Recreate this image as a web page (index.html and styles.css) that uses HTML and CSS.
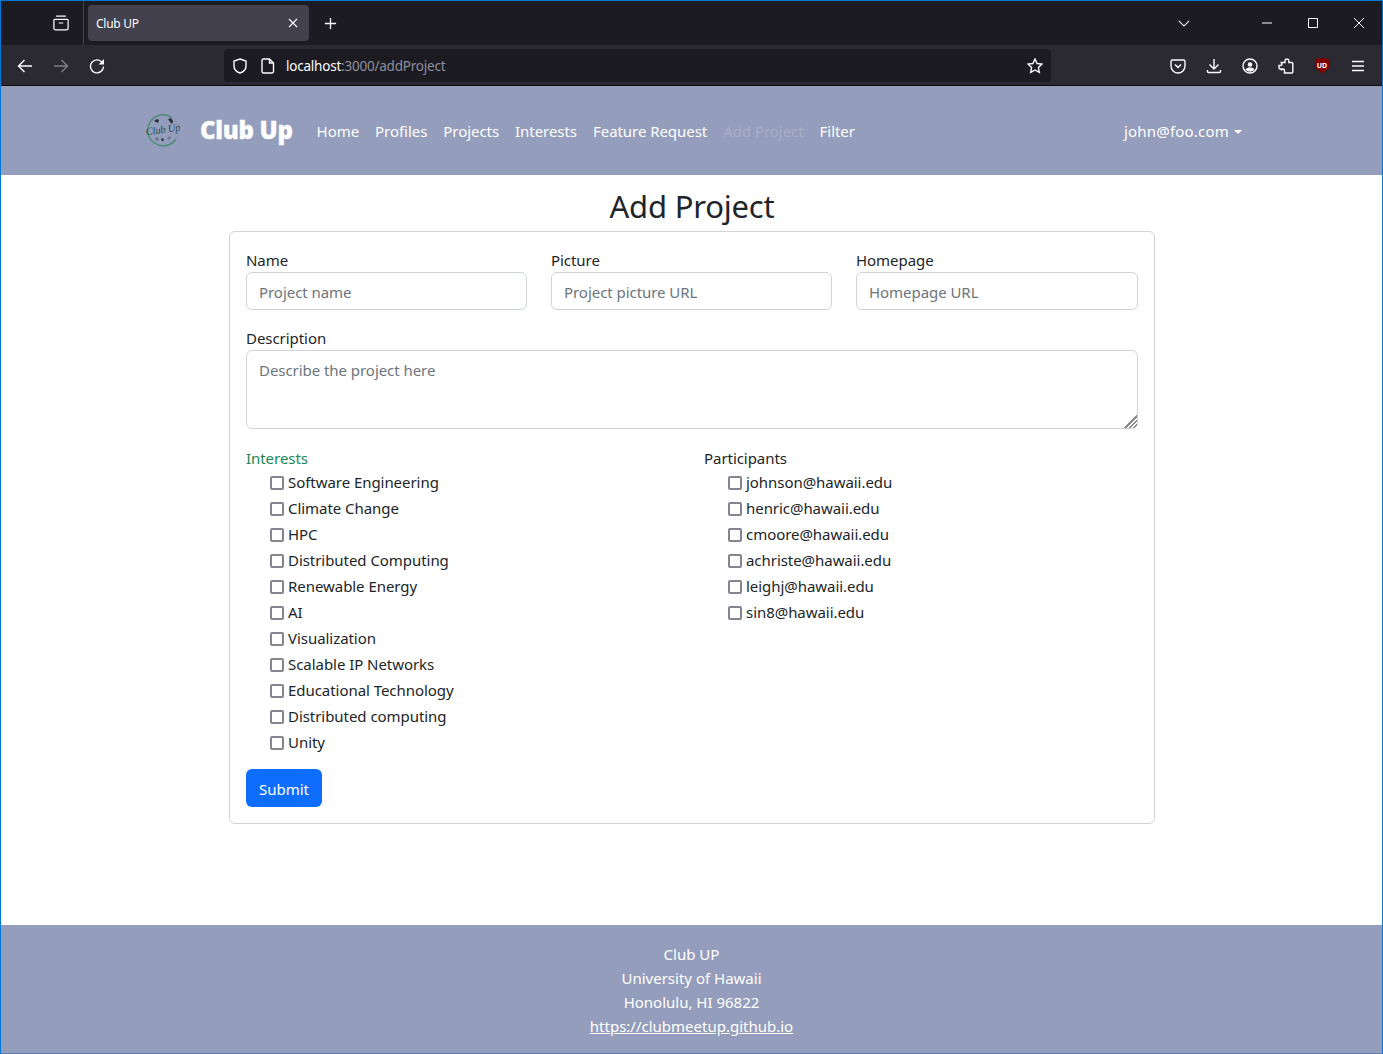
FILE: index.html
```html
<!DOCTYPE html>
<html lang="en">
<head>
    <meta charset="UTF-8">
    <title>Club UP</title>
    <link rel="stylesheet" href="styles.css">
</head>
<body>
<div class="window">
    <div class="tabstrip">
        <div class="strip-left">
            <svg class="icon" viewBox="0 0 18 18"><path d="M3.500 1.200h11M1.800 4.800h14.400a1 1 0 0 1 .8 1v9a2 2 0 0 1-2 2H3a2 2 0 0 1-2-2v-9a1 1 0 0 1 .8-1z M6.500 9h5"/></svg>
        </div>
        <div class="tab">
            <span class="tab-title">Club UP</span>
            <svg class="tab-close" viewBox="0 0 10 10"><path d="M1 1l8 8M9 1l-8 8"/></svg>
        </div>
        <svg class="new-tab" viewBox="0 0 14 14"><path d="M7 1v12M1 7h12"/></svg>
        <svg class="tabs-menu" viewBox="0 0 14 8"><path d="M1 1l6 6 6-6"/></svg>
        <svg class="win-btn win-min" viewBox="0 0 10 10"><path d="M0 5h10"/></svg>
        <svg class="win-btn win-max" viewBox="0 0 10 10"><path d="M.5.5h9v9h-9z"/></svg>
        <svg class="win-btn win-close" viewBox="0 0 10 10"><path d="M0 0l10 10M10 0L0 10"/></svg>
    </div>
    <div class="toolbar">
        <span class="tool"><svg class="icon" viewBox="0 0 16 16"><path d="M15 8H1.500M7.500 2l-6 6 6 6"/></svg></span>
        <span class="tool tool-off"><svg class="icon" viewBox="0 0 16 16"><path d="M1 8h13.500M8.500 2l6 6-6 6"/></svg></span>
        <span class="tool"><svg class="icon" viewBox="0 0 16 16"><path d="M13 4.200A6.500 6.500 0 1 0 14.500 8.500"/><path class="solid" d="M15 1v5.500H9.500z"/></svg></span>
        <div class="urlbar">
            <svg class="icon url-shield" viewBox="0 0 16 16"><path d="M8 1l6 2v5c0 3.500-3 6-6 7-3-1-6-3.500-6-7V3z"/></svg>
            <svg class="icon url-page" viewBox="0 0 14 16"><path d="M2.500 1h6l4 4v8.500a1.500 1.500 0 0 1-1.500 1.500H2.500A1.500 1.500 0 0 1 1 13.500v-11A1.500 1.500 0 0 1 2.500 1zM8.500 1v4h4"/></svg>
            <span class="url-text">localhost<span class="url-dim">:3000/addProject</span></span>
            <svg class="icon url-star" viewBox="0 0 16 16"><path d="M8 1l2.100 4.500 4.900.6-3.600 3.400.9 4.900L8 12l-4.300 2.400.9-4.900L1 6.100l4.900-.6z"/></svg>
        </div>
        <div class="tools-right">
            <span class="tool"><svg class="icon" viewBox="0 0 16 16"><path d="M2.500 2h11A1.500 1.500 0 0 1 15 3.500V8a7 7 0 0 1-14 0V3.500A1.500 1.500 0 0 1 2.500 2zM5 6.500l3 3 3-3"/></svg></span>
            <span class="tool"><svg class="icon" viewBox="0 0 16 16"><path d="M8 1v10M3.500 6.500L8 11l4.500-4.500M1.500 12v1.500a1 1 0 0 0 1 1h11a1 1 0 0 0 1-1V12"/></svg></span>
            <span class="tool"><svg class="icon" viewBox="0 0 16 16"><circle cx="8" cy="8" r="7"/><circle class="solid" cx="8" cy="6.500" r="2.300"/><path class="solid" d="M3.500 11.500c1-1.500 2.500-2 4.500-2s3.500.5 4.500 2c-1 1.300-2.700 2.200-4.500 2.200s-3.500-.9-4.500-2.200z"/></svg></span>
            <span class="tool"><svg class="icon" viewBox="0 0 16 16"><path d="M7 3.500V2.500a2 2 0 0 1 2-1.500 1.800 1.800 0 0 1 1.800 1.800v1.700h3a1 1 0 0 1 1 1V14a1 1 0 0 1-1 1H6.500v-2.500a1.500 1.500 0 0 0-3 0V11H2a1 1 0 0 1-1-1V7.500h1.500a1.500 1.500 0 0 0 0-3H7z"/></svg></span>
            <span class="tool"><span class="ublock"><span class="ublock-text">UD</span></span></span>
            <span class="tool"><svg class="icon" viewBox="0 0 16 16"><path d="M2 3.500h12M2 8h12M2 12.500h12"/></svg></span>
        </div>
    </div>

    <div class="page">
        <nav class="navbar">
            <svg class="logo" viewBox="0 0 34 34">
                <path class="logo-arc-grey" d="M26 4.500A15.500 15.500 0 0 1 30 26"/>
                <path class="logo-arc" d="M30 26A15.500 15.500 0 1 1 26 4.500"/>
                <path class="logo-bird" d="M8 8l3-2 2 1-1 3-2-1z"/>
                <path class="logo-bird" d="M22 6l3-1 2 3-1 3-2-2z"/>
                <text class="logo-text" x="17" y="20" text-anchor="middle" transform="rotate(-8 17 17)">Club Up</text>
                <path class="logo-grey" d="M9 25l3-1 1 3-3 1z"/>
                <path class="logo-bird" d="M15 26l2-1 1 3-2 0z"/>
                <path class="logo-grey" d="M21 25l3-2 1 2-3 2z"/>
            </svg>
            <a class="brand" href="#">Club Up</a>
            <div class="nav-links">
                <a href="#">Home</a>
                <a href="#">Profiles</a>
                <a href="#">Projects</a>
                <a href="#">Interests</a>
                <a href="#">Feature Request</a>
                <a class="nav-active" href="#">Add Project</a>
                <a href="#">Filter</a>
            </div>
            <a class="user-menu" href="#">john@foo.com<span class="caret"></span></a>
        </nav>

        <main class="content">
            <h1>Add Project</h1>
            <form class="card">
                <div class="row-three">
                    <div class="field">
                        <label for="name">Name</label>
                        <input id="name" type="text" placeholder="Project name">
                    </div>
                    <div class="field">
                        <label for="picture">Picture</label>
                        <input id="picture" type="text" placeholder="Project picture URL">
                    </div>
                    <div class="field">
                        <label for="homepage">Homepage</label>
                        <input id="homepage" type="text" placeholder="Homepage URL">
                    </div>
                </div>
                <div class="field field-desc">
                    <label for="description">Description</label>
                    <textarea id="description" placeholder="Describe the project here"></textarea>
                </div>
                <div class="row-two">
                    <div class="check-group">
                        <div class="group-title group-valid">Interests</div>
                        <label class="check"><input type="checkbox">Software Engineering</label>
                        <label class="check"><input type="checkbox">Climate Change</label>
                        <label class="check"><input type="checkbox">HPC</label>
                        <label class="check"><input type="checkbox">Distributed Computing</label>
                        <label class="check"><input type="checkbox">Renewable Energy</label>
                        <label class="check"><input type="checkbox">AI</label>
                        <label class="check"><input type="checkbox">Visualization</label>
                        <label class="check"><input type="checkbox">Scalable IP Networks</label>
                        <label class="check"><input type="checkbox">Educational Technology</label>
                        <label class="check"><input type="checkbox">Distributed computing</label>
                        <label class="check"><input type="checkbox">Unity</label>
                    </div>
                    <div class="check-group">
                        <div class="group-title">Participants</div>
                        <label class="check"><input type="checkbox">johnson@hawaii.edu</label>
                        <label class="check"><input type="checkbox">henric@hawaii.edu</label>
                        <label class="check"><input type="checkbox">cmoore@hawaii.edu</label>
                        <label class="check"><input type="checkbox">achriste@hawaii.edu</label>
                        <label class="check"><input type="checkbox">leighj@hawaii.edu</label>
                        <label class="check"><input type="checkbox">sin8@hawaii.edu</label>
                    </div>
                </div>
                <button class="submit-btn" type="button">Submit</button>
            </form>
        </main>

        <footer class="footer">
            <div>Club UP</div>
            <div>University of Hawaii</div>
            <div>Honolulu, HI 96822</div>
            <a href="#">https://clubmeetup.github.io</a>
        </footer>
    </div>
</div>
</body>
</html>
```

FILE: styles.css
```css
html, body {
    margin: 0;
    height: 100%;
}
body {
    font-family: "Noto Sans", Arial, sans-serif;
    font-size: 15px;
    letter-spacing: -0.05px;
    color: #212529;
    overflow: hidden;
}
.window {
    height: 1054px;
    box-sizing: border-box;
    border: 1px solid #0078d7;
    border-bottom-color: #5f7fb5;
    display: flex;
    flex-direction: column;
    background: #fff;
}
svg {
    display: block;
    flex: none;
}
.icon {
    width: 16px;
    height: 16px;
    fill: none;
    stroke: #fbfbfe;
    stroke-width: 1.400;
}
.icon .solid {
    fill: #fbfbfe;
    stroke: none;
}

/* browser tabs */
.tabstrip {
    height: 44px;
    background: #1c1b22;
    display: flex;
    align-items: center;
    flex: none;
}
.strip-left {
    width: 83px;
    height: 44px;
    box-sizing: border-box;
    border-right: 1px solid #45444d;
    display: flex;
    align-items: center;
    padding-left: 52px;
}
.tab {
    width: 221px;
    height: 36px;
    margin-left: 4px;
    padding: 0 11px 0 8px;
    box-sizing: border-box;
    background: #42414d;
    border-radius: 4px;
    display: flex;
    align-items: center;
    justify-content: space-between;
    color: #fbfbfe;
    font-size: 12px;
    letter-spacing: -0.25px;
}
.tab-close {
    width: 10px;
    height: 10px;
    fill: none;
    stroke: #fbfbfe;
    stroke-width: 1.200;
}
.new-tab {
    width: 13px;
    height: 13px;
    margin-left: 15px;
    fill: none;
    stroke: #fbfbfe;
    stroke-width: 1.400;
}
.tabs-menu {
    width: 12px;
    height: 7px;
    margin-left: 841px;
    fill: none;
    stroke: #fbfbfe;
    stroke-width: 1.300;
}
.win-btn {
    width: 10px;
    height: 10px;
    fill: none;
    stroke: #fbfbfe;
    stroke-width: 1;
}
.win-min {
    margin-left: 72px;
}
.win-max {
    margin-left: 36px;
}
.win-close {
    margin-left: 36px;
}

/* browser toolbar */
.toolbar {
    height: 39px;
    background: #2b2a33;
    border-bottom: 1px solid #0c0c0d;
    padding: 1px 6px 0;
    display: flex;
    align-items: center;
    flex: none;
}
.tool {
    width: 36px;
    height: 36px;
    display: flex;
    align-items: center;
    justify-content: center;
    flex: none;
}
.tool-off {
    opacity: 0.4;
}
.urlbar {
    width: 827px;
    height: 33px;
    box-sizing: border-box;
    padding: 0 8px;
    background: #1c1b22;
    border-radius: 4px;
    display: flex;
    align-items: center;
    color: #fbfbfe;
    font-size: 13.500px;
    letter-spacing: -0.22px;
    margin-left: 1px;
}
.toolbar > .tool:nth-child(3) {
    margin-right: 108px;
}
.url-page {
    width: 14px;
    margin-left: 13px;
}
.url-text {
    margin-left: 11px;
    flex: 1;
}
.url-dim {
    color: #8f8f9d;
}
.tools-right {
    display: flex;
    margin-left: 109px;
}
.ublock {
    width: 14px;
    height: 16px;
    background: #800000;
    clip-path: polygon(0 12%, 50% 0, 100% 12%, 100% 65%, 50% 100%, 0 65%);
    display: flex;
    align-items: center;
    justify-content: center;
}
.ublock-text {
    color: #fff;
    font-size: 7px;
    font-weight: 700;
    letter-spacing: 0;
}

/* page */
.page {
    flex: 1;
    display: flex;
    flex-direction: column;
    min-height: 0;
}
.navbar {
    height: 89px;
    box-sizing: border-box;
    background: #949dbb;
    padding: 0 140px 0 145px;
    display: flex;
    align-items: center;
    flex: none;
}
.navbar a {
    color: #fff;
    text-decoration: none;
}
.logo {
    width: 34px;
    height: 34px;
    margin-bottom: 2px;
}
.logo-arc-grey {
    fill: none;
    stroke: #8d9ab0;
    stroke-width: 1.200;
}
.logo-arc {
    fill: none;
    stroke: #4c8c76;
    stroke-width: 1.400;
}
.logo-bird {
    fill: #26303a;
}
.logo-grey {
    fill: #6f7788;
}
.logo-text {
    font-family: "Liberation Serif", serif;
    font-style: italic;
    font-size: 10.500px;
    letter-spacing: -0.2px;
    fill: #1f4f52;
}
.brand {
    margin-left: 20px;
    margin-bottom: 2px;
    font-size: 24px;
    font-weight: 900;
    letter-spacing: -0.300px;
    line-height: 1;
    -webkit-text-stroke: 0.3px #fff;
}
.nav-links {
    margin-left: 24px;
    display: flex;
    gap: 16px;
    flex: 1;
}
.navbar .nav-active {
    color: #a8aec6;
}
.user-menu {
    letter-spacing: 0.2px;
}
.caret {
    display: inline-block;
    margin-left: 5px;
    vertical-align: 3px;
    border-top: 4px solid #fff;
    border-left: 4px solid transparent;
    border-right: 4px solid transparent;
}

.content {
    flex: 1;
    padding: 0 227px 0 228px;
}
h1 {
    margin: 0;
    height: 56px;
    line-height: 62px;
    text-align: center;
    font-size: 31px;
    font-weight: 400;
    letter-spacing: -0.200px;
}
.card {
    height: 593px;
    box-sizing: border-box;
    border: 1px solid #d3d4d6;
    border-radius: 6px;
    padding: 16px;
}
.row-three {
    display: grid;
    grid-template-columns: 281px 281px 1fr;
    gap: 24px;
}
.field label {
    display: block;
    height: 24px;
    line-height: 25px;
}
.group-title {
    height: 24px;
    line-height: 26px;
}
input[type="text"],
textarea {
    display: block;
    width: 100%;
    box-sizing: border-box;
    border: 1px solid #ced4da;
    border-radius: 6px;
    padding: 7px 12px 5px;
    font: inherit;
    letter-spacing: inherit;
    line-height: 24px;
    color: #212529;
    background: #fff;
    outline: none;
}
input[type="text"] {
    height: 38px;
}
textarea {
    height: 79px;
    margin: 0;
}
textarea::-webkit-resizer {
    background:
        linear-gradient(135deg, #fff 50%, transparent 50%),
        repeating-linear-gradient(135deg, #8a8a8a 0, #8a8a8a 1.500px, #fff 1.500px, #fff 3px);
}
::placeholder {
    color: #6c757d;
    opacity: 1;
}
.field-desc {
    margin-top: 16px;
}
.row-two {
    margin-top: 16px;
    display: grid;
    grid-template-columns: 434px 434px;
    gap: 24px;
}
.group-valid {
    color: #198754;
}
.check {
    display: flex;
    align-items: center;
    height: 26px;
    padding-left: 24px;
}
.check input {
    appearance: none;
    width: 14px;
    height: 14px;
    box-sizing: border-box;
    margin: 2px 4px 0 0;
    background: #fff;
    border: 2px solid #85848f;
    border-radius: 2px;
    flex: none;
}
.submit-btn {
    display: block;
    margin-top: 14px;
    width: 76px;
    height: 38px;
    border: none;
    border-radius: 6px;
    background: #0d6efd;
    color: #fff;
    font: inherit;
    letter-spacing: 0;
    padding: 2px 0 0;
}
.footer {
    height: 128px;
    box-sizing: border-box;
    background: #949dbb;
    color: #fff;
    text-align: center;
    padding-top: 17px;
    line-height: 24px;
    letter-spacing: 0;
    flex: none;
}
.footer a {
    color: #fff;
}
```
